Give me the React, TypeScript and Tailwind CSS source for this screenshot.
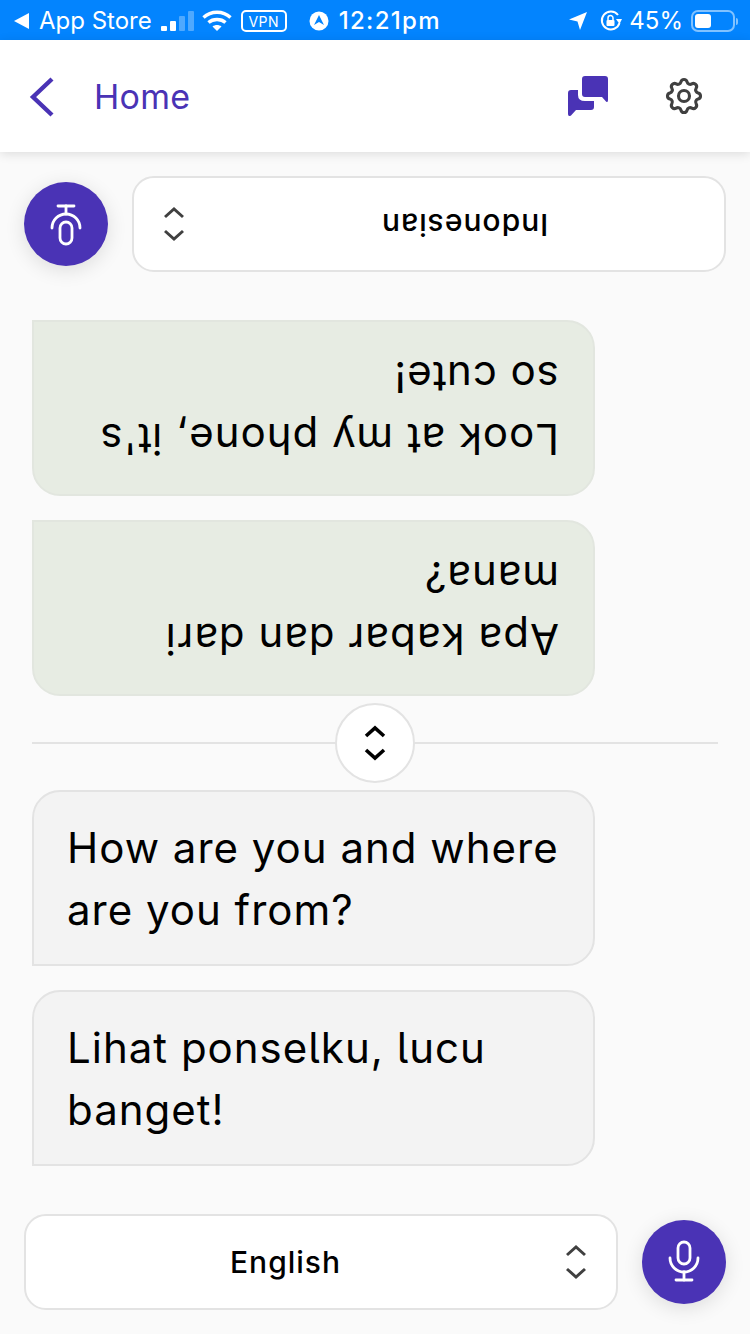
import { TbMicrophone, TbSettings } from 'react-icons/tb';

const bubbleText = "text-[42px] leading-[62px] tracking-[1px] font-normal text-black [font-feature-settings:'cv05']";

function UpDown({ className, weight = 3 }: { className?: string; weight?: number }) {
  return (
    <svg width="24" height="36" viewBox="0 0 24 36" fill="none" stroke="currentColor" strokeWidth={weight} className={className}>
      <path d="M3 11 L12 3 L21 11" />
      <path d="M3 25 L12 33 L21 25" />
    </svg>
  );
}

function StatusBar() {
  return (
    <div className="h-10 bg-[#0384fe] text-white flex items-center justify-between pl-[14px] pr-[12px] pt-[2px] text-[24px] font-['Inter',sans-serif]">
      <div className="flex items-center">
        <svg width="16" height="16" viewBox="0 0 16 16" fill="white"><path d="M0 8 L15 0 V16 Z" /></svg>
        <span className="ml-[9px]">App Store</span>
        <div className="flex items-end gap-[3px] ml-[9px] h-[20px]">
          <div className="w-[6px] h-[5px] bg-white rounded-[1px]" />
          <div className="w-[6px] h-[10px] bg-white rounded-[1px]" />
          <div className="w-[6px] h-[15px] bg-white/30 rounded-[1px]" />
          <div className="w-[6px] h-[20px] bg-white/30 rounded-[1px]" />
        </div>
        <svg width="30" height="22" viewBox="0 0 30 22" fill="none" stroke="white" strokeWidth="3.4" className="ml-[8px]">
          <path d="M1.5 7.5 C9 0.5 21 0.5 28.5 7.5" />
          <path d="M6.5 12.5 C11 8.5 19 8.5 23.5 12.5" />
          <path d="M15 21 L10.5 16.5 C13 14.5 17 14.5 19.5 16.5 Z" fill="white" stroke="none" />
        </svg>
        <div className="ml-[9px] w-[46px] h-[22px] border-2 border-white rounded-[5px] flex items-center justify-center text-[14px] tracking-[0.5px]">VPN</div>
        <svg width="20" height="20" viewBox="0 0 20 20" className="ml-[22px]">
          <circle cx="10" cy="10" r="9.5" fill="white" />
          <path d="M10 4 L15 14 L10 11 L5 14 Z" fill="#0384fe" />
        </svg>
        <span className="ml-[10px] font-medium tracking-[1.3px]">12:21pm</span>
      </div>
      <div className="flex items-center">
        <svg width="18" height="18" viewBox="0 0 18 18" fill="white"><path d="M18 0 L11 18 L8.5 9.5 L0 7.5 Z" /></svg>
        <svg width="22" height="22" viewBox="0 0 22 22" fill="none" className="ml-[13px]">
          <path d="M19.5 13 A9 9 0 1 1 18 5" stroke="white" strokeWidth="2" />
          <path d="M22 9 L16 9 L19.5 14 Z" fill="white" />
          <rect x="6.5" y="10" width="8" height="6" rx="1" fill="white" />
          <path d="M8 10 V8 A2.5 2.5 0 0 1 13 8 V10" stroke="white" strokeWidth="1.5" />
        </svg>
        <span className="ml-[7px]">45%</span>
        <div className="ml-[8px] w-[44px] h-[22px] border-2 border-white/50 rounded-[7px] p-[2px] flex">
          <div className="w-[16px] bg-white rounded-[3px]" />
        </div>
        <div className="w-[2px] h-[7px] bg-white/50 ml-[1px] rounded-r" />
      </div>
    </div>
  );
}

function Header() {
  return (
    <div className="relative z-10 h-[112px] bg-white shadow-[0_2px_10px_rgba(0,0,0,0.12)] flex items-center pl-[29px] pr-[44px]">
      <svg width="26" height="40" viewBox="0 0 26 40" fill="none" stroke="#4a33b5" strokeWidth="4.4" className="mt-[2px]">
        <path d="M23 2 L4 20 L23 38" />
      </svg>
      <span className="ml-[39px] text-[#4a33b5] text-[34px] tracking-[0.3px] mt-[1px]">Home</span>
      <svg width="40" height="40" viewBox="0 0 40 40" fill="#4a33b5" className="ml-auto -mt-[1px]">
        <path d="M14 3 Q14 0 17 0 H37 Q40 0 40 3 V24 Q40 27 38 25.5 L34 21 H17 Q14 21 14 18 Z" />
        <path d="M3 14 H10 V19 Q10 25 17 25 H26 V31 Q26 34 23 34 H8 L3 39.5 Q0 41 0 38 V17 Q0 14 3 14 Z" />
      </svg>
      <TbSettings size={44} strokeWidth={1.7} className="ml-[54px] text-[#404040] -mt-[1px]" />
    </div>
  );
}

function RoundMic({ flip }: { flip?: boolean }) {
  return (
    <div className="w-[84px] h-[84px] shrink-0 rounded-full bg-[#4a33b5] flex items-center justify-center shadow-[0_4px_20px_rgba(0,0,0,0.12)]">
      <TbMicrophone size={48} strokeWidth={1.4} className={flip ? 'text-white rotate-180' : 'text-white'} />
    </div>
  );
}

function Bubble({ text, flip }: { text: string; flip?: boolean }) {
  if (flip) {
    return (
      <div className="w-[563px] h-[176px] bg-[#e7ece3] border-2 border-[#e2e6df] rounded-[28px] rounded-tl-none pl-[33px] pr-[34px] flex items-center">
        <p className={`${bubbleText} w-full rotate-180`}>{text}</p>
      </div>
    );
  }
  return (
    <div className="w-[563px] h-[176px] bg-[#f3f3f3] border-2 border-[#e3e3e3] rounded-[28px] rounded-bl-none pl-[33px] pr-[20px] flex items-center">
      <p className={`${bubbleText} mt-[2px]`}>{text}</p>
    </div>
  );
}

export default function App() {
  return (
    <div className="w-[750px] h-[1334px] bg-[#fafafa] overflow-hidden flex flex-col font-['Inter','Liberation_Sans',sans-serif]">
      <StatusBar />
      <Header />
      <div className="flex items-center gap-[24px] px-[24px] pt-[24px]">
        <RoundMic flip />
        <div className="flex-1 h-[96px] bg-white border-2 border-[#e3e3e3] rounded-[22px] flex items-center pl-[28px] pr-[176px] justify-between">
          <UpDown className="text-[#404040]" />
          <span className="text-[30px] font-medium tracking-[1px] text-black rotate-180">Indonesian</span>
        </div>
      </div>
      <div className="flex flex-col gap-[24px] pl-[32px] pt-[48px]">
        <Bubble flip text="Look at my phone, it's so cute!" />
        <Bubble flip text="Apa kabar dan dari mana?" />
      </div>
      <div className="relative h-[94px] mx-[32px] flex items-center">
        <div className="w-full h-[2px] bg-[#e3e3e3]" />
        <div className="absolute left-[303px] top-[7px] w-[80px] h-[80px] rounded-full bg-white border-2 border-[#e3e3e3] flex items-center justify-center">
          <UpDown className="text-black" weight={3.6} />
        </div>
      </div>
      <div className="flex flex-col gap-[24px] pl-[32px]">
        <Bubble text="How are you and where are you from?" />
        <Bubble text="Lihat ponselku, lucu banget!" />
      </div>
      <div className="flex items-center gap-[24px] px-[24px] pt-[48px]">
        <div className="flex-1 h-[96px] bg-white border-2 border-[#e3e3e3] rounded-[22px] flex items-center pl-[204px] pr-[28px] justify-between">
          <span className="text-[30px] font-medium tracking-[1px] text-black mt-[1px]">English</span>
          <UpDown className="text-[#404040]" />
        </div>
        <RoundMic />
      </div>
    </div>
  );
}
